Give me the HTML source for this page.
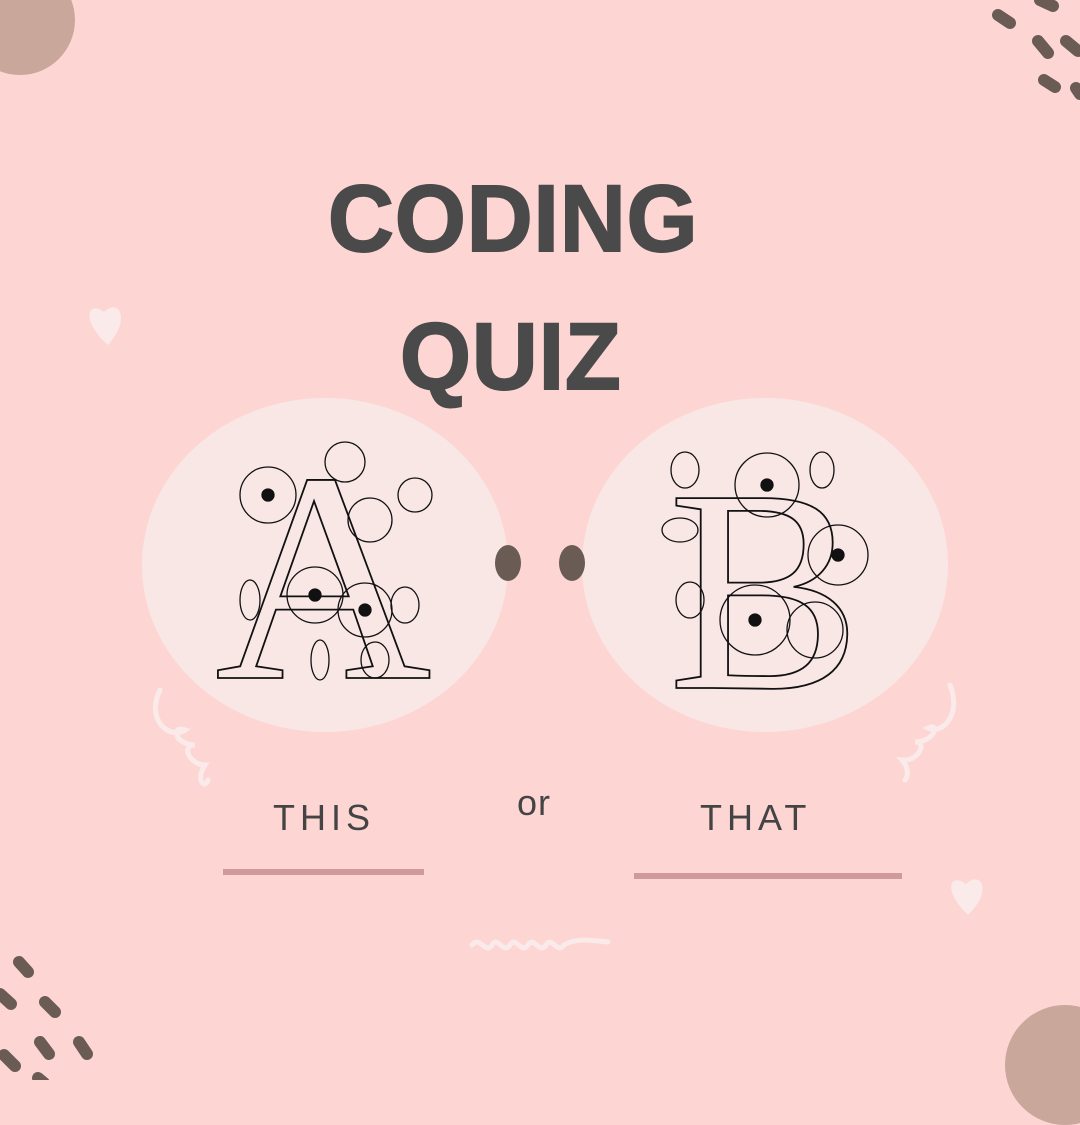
<!DOCTYPE html>
<html><head><style>
body{margin:0;width:1080px;height:1080px;overflow:hidden;background:#fdd6d4;position:relative;font-family:"Liberation Sans",sans-serif}
.abs{position:absolute}
.t{color:#4a4a4a;font-weight:bold;font-size:95px;line-height:1;transform-origin:0 0;transform:scaleX(0.96);-webkit-text-stroke:2px #4a4a4a;white-space:nowrap;letter-spacing:1px}
.s{color:#444;font-size:36px;letter-spacing:5px;line-height:1}
</style></head><body>
<div class="abs" style="left:-35px;top:-35px;width:110px;height:110px;border-radius:50%;background:#c9a89b"></div>
<div class="abs" style="left:1005px;top:1005px;width:120px;height:120px;border-radius:50%;background:#c9a89b"></div>
<svg class="abs" style="left:0;top:0" width="1080" height="1080">
<g stroke="#6b5b55" stroke-width="12" stroke-linecap="round">
<line x1="998" y1="15" x2="1010" y2="23"/><line x1="1040" y1="0" x2="1053" y2="6"/><line x1="1038" y1="41" x2="1048" y2="53"/><line x1="1066" y1="41" x2="1078" y2="51"/><line x1="1044" y1="80" x2="1055" y2="87"/><line x1="1076" y1="88" x2="1080" y2="94"/>
<line x1="19" y1="962" x2="28" y2="972"/><line x1="0" y1="994" x2="11" y2="1004"/><line x1="45" y1="1002" x2="55" y2="1012"/><line x1="4" y1="1055" x2="15" y2="1066"/><line x1="40" y1="1042" x2="49" y2="1054"/><line x1="79" y1="1042" x2="87" y2="1054"/><line x1="38" y1="1078" x2="44" y2="1083"/>
</g>
<g fill="#fbeaea">
<path d="M108 345 C80 320 88 300 104 312 C118 298 132 318 108 345Z"/>
<path d="M968 915 C942 890 950 872 966 884 C980 870 994 890 968 915Z"/>
</g>
<g fill="none" stroke="#fbeaea" stroke-width="5" stroke-linecap="round">
<path d="M160 690 C145 720 170 740 185 730 C170 725 175 745 195 745 C180 745 190 765 205 765 C195 780 205 790 208 780"/>
<path d="M950 685 C962 715 942 735 928 728 C940 722 935 742 915 742 C928 742 918 762 902 760 C912 772 905 780 905 780"/>
<path d="M472 945 C480 935 485 955 492 945 C498 935 503 955 510 945 C516 935 521 955 528 945 C534 935 539 955 546 945 C552 935 557 955 564 945 C575 938 590 940 608 942"/>
</g>
<ellipse cx="325" cy="565" rx="183" ry="167" fill="#f9e7e6"/>
<ellipse cx="765" cy="565" rx="183" ry="167" fill="#f9e7e6"/>
<ellipse cx="508" cy="563" rx="13" ry="18" fill="#6b5b55"/>
<ellipse cx="572" cy="563" rx="13" ry="18" fill="#6b5b55"/>
<g fill="none" stroke="#111" stroke-width="1.3">
<circle cx="268" cy="495" r="28"/><circle cx="268" cy="495" r="6" fill="#111"/>
<circle cx="345" cy="462" r="20"/><circle cx="415" cy="495" r="17"/><circle cx="370" cy="520" r="22"/>
<circle cx="315" cy="595" r="28"/><circle cx="315" cy="595" r="6" fill="#111"/>
<circle cx="365" cy="610" r="27"/><circle cx="365" cy="610" r="6" fill="#111"/>
<ellipse cx="250" cy="600" rx="10" ry="20"/><ellipse cx="405" cy="605" rx="14" ry="18"/><ellipse cx="320" cy="660" rx="9" ry="20"/><ellipse cx="375" cy="660" rx="14" ry="18"/>
<circle cx="767" cy="485" r="32"/><circle cx="767" cy="485" r="6" fill="#111"/>
<circle cx="838" cy="555" r="30"/><circle cx="838" cy="555" r="6" fill="#111"/>
<circle cx="755" cy="620" r="35"/><circle cx="755" cy="620" r="6" fill="#111"/>
<circle cx="815" cy="630" r="28"/>
<ellipse cx="685" cy="470" rx="14" ry="18"/><ellipse cx="680" cy="530" rx="18" ry="12"/><ellipse cx="690" cy="600" rx="14" ry="18"/><ellipse cx="822" cy="470" rx="12" ry="18"/>
</g>
<text x="215" y="678" font-family="Liberation Serif,serif" font-size="300" fill="none" stroke="#111" stroke-width="1.8">A</text>
<text x="668" y="688" font-family="Liberation Serif,serif" font-size="290" fill="none" stroke="#111" stroke-width="1.8">B</text>
<rect x="223" y="869" width="201" height="6" fill="#d09a9c"/>
<rect x="634" y="873" width="268" height="6" fill="#d09a9c"/>
</svg>
<div class="abs t" style="left:328px;top:172px">CODING</div>
<div class="abs t" style="left:400px;top:310px">QUIZ</div>
<div class="abs s" style="left:273px;top:800px">THIS</div>
<div class="abs s" style="left:517px;top:785px;letter-spacing:1px">or</div>
<div class="abs s" style="left:700px;top:800px">THAT</div>
</body></html>
